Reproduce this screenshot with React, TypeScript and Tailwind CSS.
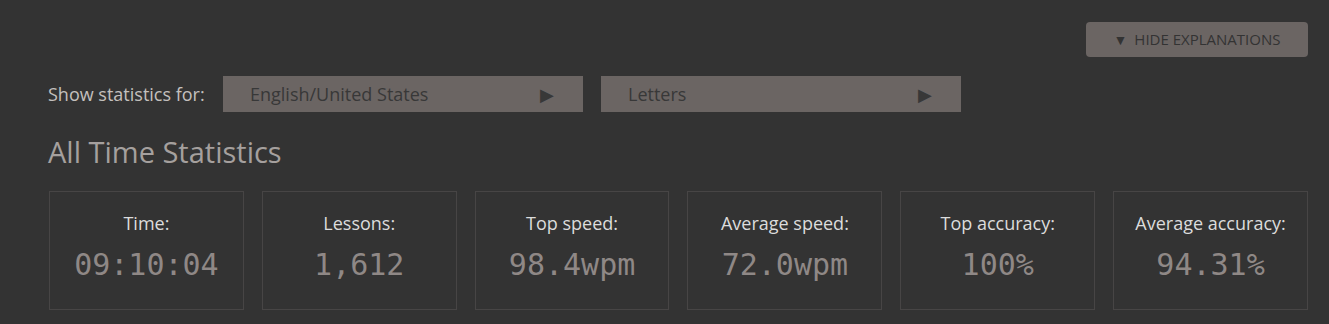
const stats = [
  { label: "Time:", value: "09:10:04" },
  { label: "Lessons:", value: "1,612" },
  { label: "Top speed:", value: "98.4wpm" },
  { label: "Average speed:", value: "72.0wpm" },
  { label: "Top accuracy:", value: "100%" },
  { label: "Average accuracy:", value: "94.31%" },
];

function Select({ label }: { label: string }) {
  return (
    <button className="flex h-9 w-[360px] items-center justify-between bg-[#6b6563] pl-[27px] pr-[29px] text-[18px] text-[#383838]">
      <span>{label}</span>
      <span className="text-[18px] leading-none">▶</span>
    </button>
  );
}

export default function App() {
  return (
    <div
      className="h-[324px] w-[1329px] overflow-hidden bg-[#333333] pl-12 pr-[21px] pt-[22px]"
      style={{ fontFamily: '"Open Sans", sans-serif' }}
    >
      <div className="flex justify-end">
        <button className="flex h-[35px] w-[222px] items-center justify-center gap-[7px] rounded-[4px] bg-[#6b6563] text-[15px] uppercase text-[#333333]">
          <span className="text-[14px] leading-none">▼</span>
          Hide explanations
        </button>
      </div>

      <div className="mt-[19px] flex items-center">
        <span className="w-[175px] text-[18px] text-[#c4c0be]">Show statistics for:</span>
        <div className="flex gap-[18px]">
          <Select label="English/United States" />
          <Select label="Letters" />
        </div>
      </div>

      <h2 className="mt-[22px] text-[29px] leading-[36px] text-[#a5a09e]">All Time Statistics</h2>

      <div className="mt-[21px] ml-px flex gap-[18px]">
        {stats.map((s) => (
          <div
            key={s.label}
            className="flex h-[119px] w-[195px] flex-col items-center border border-[#474545] pt-[19px]"
          >
            <div className="text-[18px] leading-[24px] text-[#dcdcdc]">{s.label}</div>
            <div
              className="mt-[12px] text-[30px] leading-[36px] text-[#8f8886]"
              style={{ fontFamily: '"DejaVu Sans Mono", monospace' }}
            >
              {s.value}
            </div>
          </div>
        ))}
      </div>
    </div>
  );
}
